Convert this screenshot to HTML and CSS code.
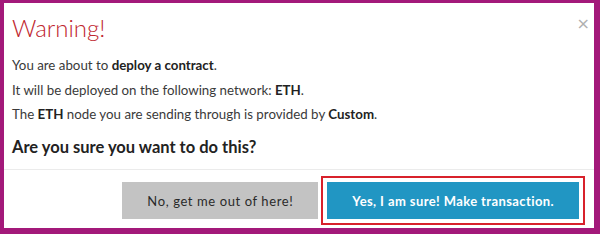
FILE: index.html
```html
<!DOCTYPE html>
<html>
<head>
<meta charset="utf-8">
<link rel="stylesheet" href="styles.css">
</head>
<body>
<div class="frame">
  <div class="modal-header">
    <h3 class="title">Warning!</h3>
    <button class="close" aria-label="Close">&times;</button>
  </div>
  <div class="modal-body">
    <p>You are about to <strong>deploy a contract</strong>.</p>
    <p>It will be deployed on the following network: <strong>ETH</strong>.</p>
    <p>The <strong>ETH</strong> node you are sending through is provided by <strong>Custom</strong>.</p>
    <h4 class="question">Are you sure you want to do this?</h4>
  </div>
  <div class="modal-footer">
    <button class="btn btn-default">No, get me out of here!</button>
    <button class="btn btn-primary">Yes, I am sure! Make transaction.</button>
  </div>
</div>
</body>
</html>
```
FILE: styles.css
```css
html, body {
  margin: 0;
  padding: 0;
  background: #ffffff;
}
.frame {
  box-sizing: border-box;
  width: 600px;
  height: 234px;
  border-style: solid;
  border-color: #a3197a;
  border-width: 3px 6px 6px 4px;
  background: #ffffff;
  font-family: Lato, "Open Sans", sans-serif;
  color: #333333;
  display: flex;
  flex-direction: column;
}
.modal-header {
  display: flex;
  justify-content: space-between;
  align-items: flex-start;
  padding: 9px 0 0 8px;
}
.title {
  margin: 0;
  font-size: 24px;
  font-weight: 300;
  line-height: 31px;
  color: #c0252e;
}
.close {
  border: 0;
  background: none;
  padding: 0;
  margin: 4px 4px 0 0;
  font-family: "DejaVu Sans", sans-serif;
  font-size: 16px;
  line-height: 16px;
  color: #b0b0b0;
  cursor: pointer;
}
.modal-body {
  padding: 0 8px;
  flex: 1;
}
.modal-body p {
  margin: 0;
  font-size: 13.3px;
  line-height: 24.5px;
  color: #3a3a3a;
}
.modal-body p:first-child {
  margin-top: 10px;
}
.modal-body strong {
  font-weight: 700;
  color: #222222;
}
.question {
  margin: 8px 0 0;
  font-size: 16.5px;
  font-weight: 700;
  line-height: 24px;
  color: #222222;
}
.modal-footer {
  border-top: 1px solid #ebebeb;
  display: flex;
  justify-content: flex-end;
  gap: 9px;
  padding: 12px 15px 9px;
}
.btn {
  border: 0;
  height: 37px;
  padding: 0 25px;
  font-family: Lato, "Open Sans", sans-serif;
  font-size: 13px;
  cursor: pointer;
}
.btn-default {
  background: #c3c3c3;
  color: #2a2a2a;
  letter-spacing: 0.6px;
}
.btn-primary {
  background: #2196c3;
  color: #ffffff;
  font-weight: 700;
  letter-spacing: 0.4px;
  outline: 2px solid #d8212b;
  outline-offset: 4px;
}
```
